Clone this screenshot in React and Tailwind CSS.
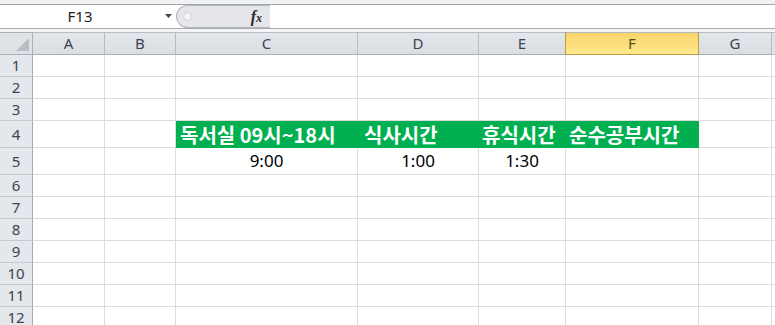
const cols = ['A', 'B', 'C', 'D', 'E', 'F', 'G'];

const rows = [
    { n: 1, h: 'h-[22px]' },
    { n: 2, h: 'h-[22px]' },
    { n: 3, h: 'h-[22px]' },
    { n: 4, h: 'h-[27px]' },
    { n: 5, h: 'h-[27px]' },
    { n: 6, h: 'h-[22px]' },
    { n: 7, h: 'h-[22px]' },
    { n: 8, h: 'h-[22px]' },
    { n: 9, h: 'h-[22px]' },
    { n: 10, h: 'h-[22px]' },
    { n: 11, h: 'h-[22px]' },
    { n: 12, h: 'h-[22px]' },
];

// row 4 headers (green fill) and row 5 values
const headers = { C: ['독서실 09시~18시', 'pl-[4px]'], D: ['식사시간', 'pl-[6px]'], E: ['휴식시간', 'pl-[3px]'], F: ['순수공부시간', 'pl-[3px]'] };
const values = { C: '9:00', D: '1:00', E: '1:30' };

const FormulaBar = () => (
    <>
        <div className="h-[5px] bg-[#f1f2f4] border-b border-[#a3a6ab]" />
        <div className="h-[24px] flex bg-white border-b border-[#a9abaf]">
            <div className="w-[176px] relative flex items-center">
                <span className="w-[160px] text-center text-[15px] text-[#222]">F13</span>
                <svg className="absolute left-[165px] top-[9px]" width="7" height="4" viewBox="0 0 7 4">
                    <path d="M0 0H7L3.5 4Z" fill="#444" />
                </svg>
            </div>
            <div className="w-[94px] flex items-center bg-[#e4e6ea] rounded-l-full border-l border-y border-[#b4b7bc] border-r-[#b9bcc1] relative">
                <span className="absolute left-[6px] top-[6px] w-[9px] h-[9px] rounded-full bg-[#f3f4f6] border border-[#cfd2d6]" />
                <span className="ml-auto mr-[8px] text-[16px] font-bold italic text-[#2a2a2a] leading-none" style={{ fontFamily: '"Liberation Serif", serif' }}>
                    f<span className="text-[12px]">x</span>
                </span>
            </div>
            <div className="flex-1 bg-white" />
        </div>
        <div className="h-[3px] bg-[#f4f5f7]" />
    </>
);

export default function App() {
    return (
        <div className="w-[775px] h-[325px] overflow-hidden bg-white" style={{ fontFamily: '"Noto Sans", "Noto Sans CJK KR", sans-serif' }}>
            <FormulaBar />
            <div className="grid grid-cols-[33px_72px_71px_182px_121px_87px_133px_73px_1fr]">
                {/* corner */}
                <div className="h-[23px] bg-[#dfe3e8] border-t border-r border-b border-[#a9b0b8] relative">
                    <svg className="absolute right-[3px] bottom-[3px]" width="13" height="13" viewBox="0 0 13 13">
                        <path d="M13 0V13H0Z" fill="#b9bec4" />
                    </svg>
                </div>
                {cols.map((c) =>
                    c === 'F' ? (
                        <div key={c} className="h-[23px] flex items-center justify-center text-[15px] text-[#5e4a12] bg-gradient-to-b from-[#f8d46a] to-[#ffe98e] border-t border-t-[#b3b8be] border-l border-r border-b border-[#c39a3c] -ml-px">
                            {c}
                        </div>
                    ) : (
                        <div key={c} className="h-[23px] flex items-center justify-center text-[15px] text-[#3c4450] bg-gradient-to-b from-[#e3e6ea] to-[#dadee3] border-t border-r border-b border-[#b6bcc4] border-b-[#a9b0b8]">
                            {c}
                        </div>
                    )
                )}
                <div className="h-[23px] bg-[#dfe3e8] border-t border-b border-[#b6bcc4]" />

                {rows.map((r) => (
                    <div key={r.n} className="contents">
                        <div className={`${r.h} flex items-center justify-center text-[15px] text-[#3c4450] bg-[#e4e7eb] border-r border-r-[#a3aab3] border-b border-b-[#c6cbd1]`}>
                            {r.n}
                        </div>
                        {cols.map((c) => {
                            if (r.n === 4 && headers[c]) {
                                return (
                                    <div key={c} className={`${r.h} flex items-center bg-[#00b050] text-white text-[20px] font-bold whitespace-nowrap ${headers[c][1]}`} style={{ fontFamily: '"Noto Sans CJK KR", sans-serif' }}>
                                        {headers[c][0]}
                                    </div>
                                );
                            }
                            if (r.n === 5 && values[c]) {
                                return (
                                    <div key={c} className={`${r.h} flex items-center justify-center text-[17px] text-black border-r border-b border-[#dadcdd]`}>
                                        {values[c]}
                                    </div>
                                );
                            }
                            return <div key={c} className={`${r.h} border-r border-b border-[#dadcdd]`} />;
                        })}
                        <div className={`${r.h} border-b border-[#dadcdd]`} />
                    </div>
                ))}
            </div>
        </div>
    );
}
